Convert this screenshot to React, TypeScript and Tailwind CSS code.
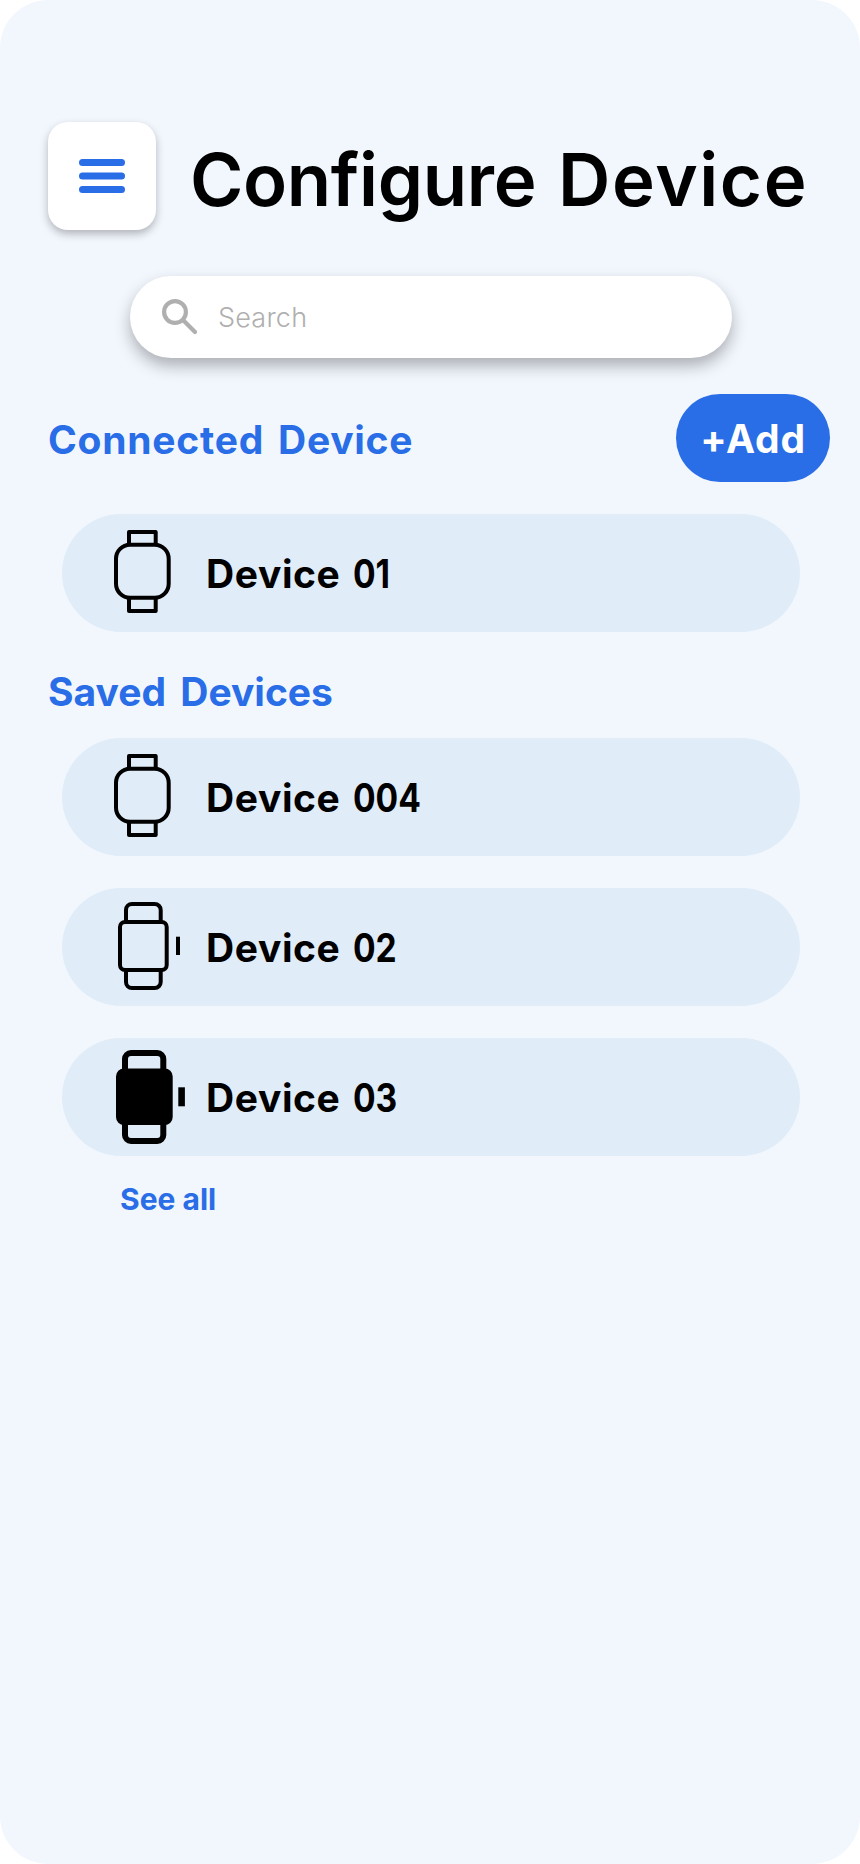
type WatchKind = "round" | "outline" | "solid";

function WatchIcon({ kind }: { kind: WatchKind }) {
  return (
    <svg className="h-[118px] w-[90px] shrink-0" viewBox="0 0 90 118" fill="none" stroke="#000">
      {kind === "round" && (
        <g strokeWidth="4" strokeLinejoin="round">
          <path d="M19 31V18H45.7V31M19 84V97H45.7V84" />
          <rect x="6" y="30.7" width="52.7" height="53" rx="14" />
        </g>
      )}
      {kind === "outline" && (
        <g strokeWidth="4">
          <path d="M16 34V22A6 6 0 0 1 22 16H44.7A6 6 0 0 1 50.7 22V34M16 82V94A6 6 0 0 0 22 100H44.7A6 6 0 0 0 50.7 94V82" />
          <rect x="10" y="34" width="46.7" height="48" rx="5" />
          <path d="M68 48.7V67" />
        </g>
      )}
      {kind === "solid" && (
        <g strokeWidth="6">
          <path d="M15 34V21A6 6 0 0 1 21 15H47.3A6 6 0 0 1 53.3 21V34M15 84V97A6 6 0 0 0 21 103H47.3A6 6 0 0 0 53.3 97V84" />
          <rect x="6" y="30.5" width="56.7" height="56.5" rx="8" fill="#000" stroke="none" />
          <path d="M71.6 49.3V68.3" strokeWidth="6.6" />
        </g>
      )}
    </svg>
  );
}

function DeviceRow({ id, kind }: { id: string; kind: WatchKind }) {
  return (
    <li className="flex h-[118px] w-[738px] items-center rounded-full bg-[#e0ecf7] pl-12">
      <WatchIcon kind={kind} />
      <span className="ml-1.5 text-[39px] leading-none font-[650] whitespace-nowrap">
        <span className="tracking-[0.6px] [word-spacing:3px]">Device </span>
        <span className="inline-block origin-left scale-x-[0.86]">{id}</span>
      </span>
    </li>
  );
}

export default function App() {
  return (
    <div className="bg-white font-['Inter',sans-serif] text-black">
      <main className="flex h-[1864px] w-[860px] flex-col items-start rounded-[48px] bg-[#f2f7fe] pt-[122px]">
        <header className="flex h-[108px] items-center pl-12">
          <button className="flex size-[108px] items-center justify-center rounded-[20px] bg-white shadow-[0_4px_8px_rgba(0,0,0,0.27)]">
            <svg className="h-[34px] w-[46px]" viewBox="0 0 46 34" fill="#296de7">
              <rect width="46" height="7" rx="3.5" />
              <rect y="13.4" width="46" height="7" rx="3.5" />
              <rect y="27" width="46" height="7" rx="3.5" />
            </svg>
          </button>
          <h1 className="ml-[34px] pt-[9px] text-[72.5px] leading-none font-semibold whitespace-nowrap">
            <span className="tracking-[-0.35px] [word-spacing:4px]">Configure </span>
            <span className="tracking-[1.6px]">Device</span>
          </h1>
        </header>

        <div className="mt-[46px] ml-[130px] flex h-[82px] w-[602px] items-center rounded-full bg-white pl-8 shadow-[0_8px_16px_rgba(0,0,0,0.29)]">
          <svg className="size-9 shrink-0" viewBox="0 0 36 36" fill="none" stroke="#afafaf" strokeWidth="4.2" strokeLinecap="round">
            <circle cx="13" cy="13" r="10.9" />
            <path d="M21.5 21.5L33 33" />
          </svg>
          <span className="ml-5 text-[27px] leading-none font-light tracking-[0.2px] text-[#afafaf]">Search</span>
        </div>

        <div className="mt-9 flex h-[88px] w-full items-center justify-between pr-[30px] pl-12">
          <h2 className="pt-[3px] text-[39px] leading-none font-[650] tracking-[0.75px] [word-spacing:4px] whitespace-nowrap text-[#296de7]">
            Connected Device
          </h2>
          <button className="flex h-[88px] w-[154px] items-center justify-center rounded-full bg-[#296de7] text-[39px] leading-none font-[650] tracking-[0.8px] text-white">
            +Add
          </button>
        </div>

        <ul className="mt-8 ml-[62px]">
          <DeviceRow id="01" kind="round" />
        </ul>

        <h2 className="mt-10 ml-12 text-[39px] leading-[40px] font-[650] [word-spacing:5px] whitespace-nowrap text-[#296de7]">
          Saved Devices
        </h2>
        <ul className="mt-[26px] ml-[62px] flex flex-col gap-8">
          <DeviceRow id="004" kind="round" />
          <DeviceRow id="02" kind="outline" />
          <DeviceRow id="03" kind="solid" />
        </ul>
        <a className="mt-7 ml-[120px] text-[30px] leading-[30px] font-[650] text-[#296de7]">See all</a>
      </main>
    </div>
  );
}
